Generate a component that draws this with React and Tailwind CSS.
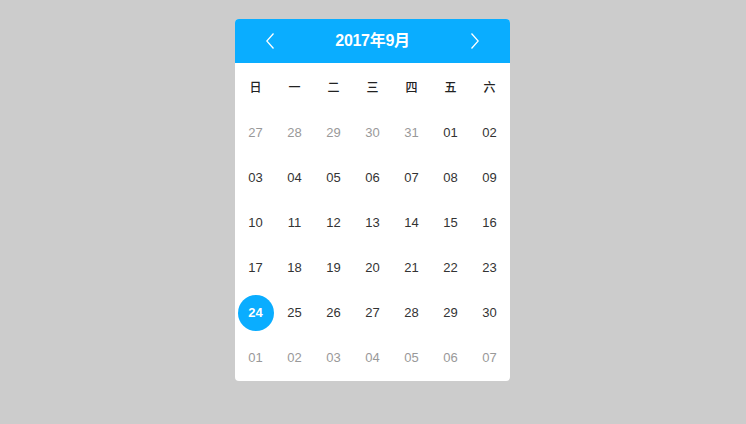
import React from "react";

const weekdays = ["日", "一", "二", "三", "四", "五", "六"];

const days = [
  ["27", 0], ["28", 0], ["29", 0], ["30", 0], ["31", 0], ["01", 1], ["02", 1],
  ["03", 1], ["04", 1], ["05", 1], ["06", 1], ["07", 1], ["08", 1], ["09", 1],
  ["10", 1], ["11", 1], ["12", 1], ["13", 1], ["14", 1], ["15", 1], ["16", 1],
  ["17", 1], ["18", 1], ["19", 1], ["20", 1], ["21", 1], ["22", 1], ["23", 1],
  ["24", 2], ["25", 1], ["26", 1], ["27", 1], ["28", 1], ["29", 1], ["30", 1],
  ["01", 0], ["02", 0], ["03", 0], ["04", 0], ["05", 0], ["06", 0], ["07", 0],
];

export default function App() {
  return (
    <div
      className="w-[746px] h-[424px] bg-[#cccccc] flex pl-[235px] pt-[19px]"
      style={{ fontFamily: '"Liberation Sans", "Noto Sans CJK SC", sans-serif' }}
    >
      <div className="w-[275px] h-[362px] bg-white rounded-[4px] overflow-hidden flex flex-col">
        <div className="h-[44px] bg-[#0aadff] flex items-center justify-between px-[31px] text-white">
          <svg width="8" height="16" viewBox="0 0 8 16" fill="none">
            <polyline points="7.5,0.5 0.8,8 7.5,15.5" stroke="#ffffff" strokeWidth="1.3" strokeLinejoin="miter" />
          </svg>
          <div className="text-[16px] font-semibold tracking-[-0.3px]">2017年9月</div>
          <svg width="8" height="16" viewBox="0 0 8 16" fill="none">
            <polyline points="0.5,0.5 7.2,8 0.5,15.5" stroke="#ffffff" strokeWidth="1.3" strokeLinejoin="miter" />
          </svg>
        </div>
        <div className="px-px pt-[2px] grid grid-cols-[repeat(7,39px)] auto-rows-[45px]">
          {weekdays.map((w) => (
            <div key={w} className="flex items-center justify-center text-[12px] font-medium text-[#222222]">
              {w}
            </div>
          ))}
          {days.map(([d, t], i) => (
            <div key={i} className="flex items-center justify-center">
              {t === 2 ? (
                <div className="w-[36px] h-[36px] rounded-full bg-[#0aadff] text-white font-bold text-[13px] flex items-center justify-center">
                  {d}
                </div>
              ) : (
                <span className={`text-[13px] ${t === 1 ? "text-[#333333]" : "text-[#999999]"}`}>{d}</span>
              )}
            </div>
          ))}
        </div>
      </div>
    </div>
  );
}
